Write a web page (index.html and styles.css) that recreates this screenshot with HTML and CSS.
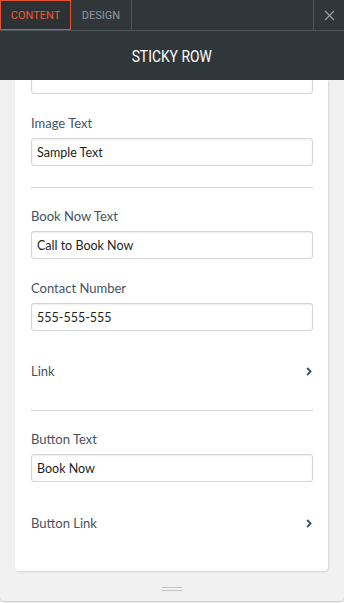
FILE: index.html
```html
<!DOCTYPE html>
<html>
<head>
<meta charset="utf-8">
<link rel="stylesheet" href="styles.css">
</head>
<body>
<div class="app">
  <div class="tabs">
    <div class="tab active">CONTENT</div>
    <div class="tab">DESIGN</div>
    <div class="spacer"></div>
    <div class="close">
      <svg width="11" height="11" viewBox="0 0 11 11"><path d="M1 1 L10 10 M10 1 L1 10" stroke="#9aa3a8" stroke-width="1.1" fill="none"/></svg>
    </div>
  </div>
  <div class="title"><span class="title-text">STICKY ROW</span></div>
  <div class="body">
    <div class="panel">
      <div class="input first"></div>
      <div class="field">
        <div class="label">Image Text</div>
        <div class="input">Sample Text</div>
      </div>
      <div class="divider"></div>
      <div class="field">
        <div class="label">Book Now Text</div>
        <div class="input">Call to Book Now</div>
      </div>
      <div class="field">
        <div class="label">Contact Number</div>
        <div class="input">555-555-555</div>
      </div>
      <div class="link-row">
        <span class="label">Link</span>
        <svg class="chev" width="6" height="9" viewBox="0 0 6 9"><path d="M1.2 1 L4.6 4.5 L1.2 8" stroke="#34506a" stroke-width="1.8" fill="none"/></svg>
      </div>
      <div class="divider"></div>
      <div class="field">
        <div class="label">Button Text</div>
        <div class="input">Book Now</div>
      </div>
      <div class="link-row last">
        <span class="label">Button Link</span>
        <svg class="chev" width="6" height="9" viewBox="0 0 6 9"><path d="M1.2 1 L4.6 4.5 L1.2 8" stroke="#34506a" stroke-width="1.8" fill="none"/></svg>
      </div>
    </div>
    <div class="grip"><span></span><span></span></div>
  </div>
</div>
</body>
</html>
```

FILE: styles.css
```css
* { box-sizing: border-box; }
html, body { margin: 0; padding: 0; background: #ffffff; }
body { width: 344px; height: 603px; overflow: hidden; font-family: Lato, "Open Sans", sans-serif; }
.app {
  width: 344px;
  height: 601px;
  display: flex;
  flex-direction: column;
  background: #f1f1f1;
  border-radius: 0 0 4px 4px;
  box-shadow: 0 1px 2px rgba(0,0,0,0.25);
  overflow: hidden;
}
.tabs {
  display: flex;
  height: 31px;
  background: #30373a;
  border-bottom: 1px solid #4f575b;
  font-family: Roboto, "Liberation Sans", sans-serif;
  font-size: 11px;
}
.tab {
  display: flex;
  align-items: center;
  justify-content: center;
  color: #8d9aa2;
  height: 30px;
}
.tab.active {
  width: 71px;
  border: 1px solid #e4522f;
  color: #ef5a33;
  background: #2b3134;
}
.tab:nth-child(2) {
  width: 61px;
  border-right: 1px solid #4f575b;
}
.spacer { flex: 1; }
.close {
  width: 31px;
  height: 30px;
  border-left: 1px solid #4f575b;
  display: flex;
  align-items: center;
  justify-content: center;
}
.title {
  height: 49px;
  background: #30373a;
  color: #ffffff;
  font-family: Roboto, "Liberation Sans", sans-serif;
  font-size: 16.5px;
  display: flex;
  align-items: center;
  justify-content: center;
  padding-top: 2px;
}
.title-text {
  display: inline-block;
  transform: scaleX(0.84);
}
.body {
  flex: 1;
  display: flex;
  flex-direction: column;
  align-items: flex-start;
  padding-left: 15px;
}
.panel {
  width: 313px;
  height: 491px;
  background: #ffffff;
  border-radius: 0 0 4px 4px;
  box-shadow: 1px 1px 2px rgba(0,0,0,0.12);
  padding: 0 15px 0 16px;
  overflow: hidden;
}
.input {
  height: 28px;
  border: 1px solid #cfd5d9;
  border-radius: 3px;
  box-shadow: inset 0 1px 2px rgba(0,0,0,0.07);
  font-size: 12.5px;
  color: #1b1f22;
  padding: 0 5px;
  display: flex;
  align-items: center;
}
.input.first { margin-top: -14px; }
.label {
  font-size: 13px;
  color: #46535d;
  line-height: 18px;
}
.field { margin-top: 20px; }
.field .label { margin-bottom: 6px; }
.divider {
  height: 1px;
  background: #d3d9dc;
  margin-top: 21px;
}
.divider + .field { margin-top: 19px; }
.link-row {
  display: flex;
  justify-content: space-between;
  align-items: center;
  height: 18px;
  margin-top: 31px;
  margin-bottom: 30px;
}
.link-row.last { margin-top: 32px; }
.link-row + .divider { margin-top: 0; }
.chev { margin-right: 1px; }
.grip {
  margin-top: 16px;
  margin-left: 147px;
  width: 20px;
  display: flex;
  flex-direction: column;
  gap: 2px;
}
.grip span {
  height: 1px;
  background: #c4c4c4;
}
```
